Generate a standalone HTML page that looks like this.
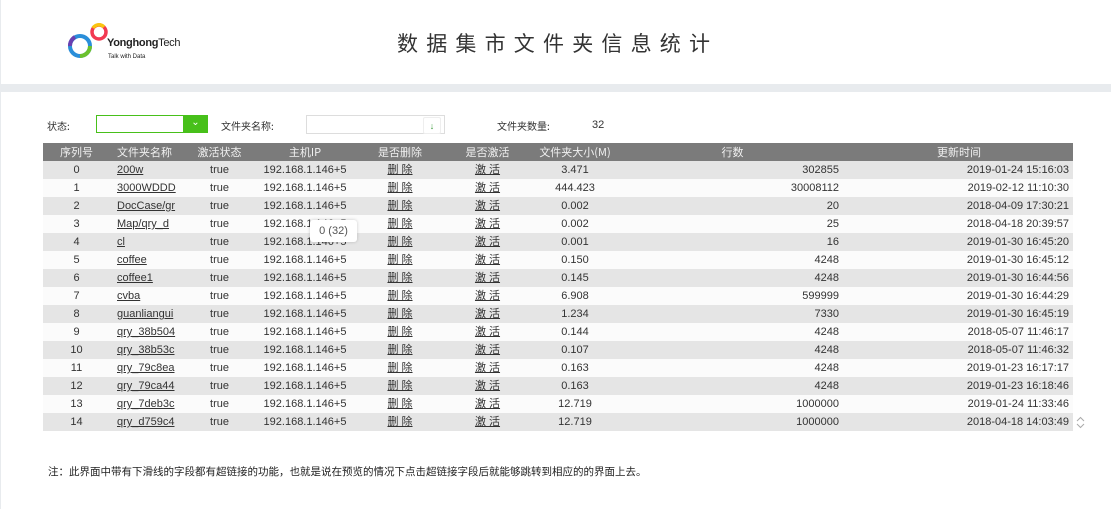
<!DOCTYPE html>
<html><head><meta charset="utf-8"><style>
*{margin:0;padding:0;box-sizing:border-box}
body{width:1111px;height:509px;background:#fff;position:relative;overflow:hidden;font-family:"Liberation Sans","Noto Sans CJK SC",sans-serif;color:#333;font-size:11px}
.a{position:absolute;white-space:nowrap}
.band{left:0;top:84px;width:1111px;height:8px;background:#e8ebee}
.lb{left:0;top:0;width:1px;height:509px;background:#e8ebee}
.title{left:397px;top:28px;font-size:21px;letter-spacing:8.2px;color:#333;font-family:"Noto Sans CJK SC",sans-serif}
table{position:absolute;left:43px;top:143px;width:1030px;border-collapse:collapse;font-size:11px;table-layout:fixed}
td,th{height:18px;padding:0;line-height:18px;white-space:nowrap;overflow:hidden}
th{background:#7b7b7b;color:#f0f0f0;font-weight:normal;font-family:"Noto Sans CJK SC",sans-serif}
tr:nth-child(even) td{background:#e5e5e5}
tr:nth-child(odd) td{background:#fbfbfb}
u{text-decoration:underline}
.c{text-align:center}.r{text-align:right;padding-right:6px}.t{text-align:right;padding-right:4px}
</style></head><body>
<div class="a lb"></div>
<svg class="a" style="left:66px;top:18px" width="44" height="44" viewBox="0 0 44 44">
<circle cx="33" cy="14" r="7" fill="none" stroke="#f23a52" stroke-width="3.5"/>
<path d="M27 10 A7 7 0 0 1 38 9" fill="none" stroke="#f9c510" stroke-width="3.5"/>
<circle cx="14" cy="28" r="10" fill="none" stroke="#2a8ed9" stroke-width="4"/>
<path d="M14 38 A10 10 0 0 0 24 28" fill="none" stroke="#6bc12d" stroke-width="4"/>
<path d="M4 28 A10 10 0 0 1 9 19" fill="none" stroke="#6a3fb0" stroke-width="4"/>
</svg>
<div class="a" style="left:107px;top:37px;font-size:11px;font-weight:bold;color:#222;letter-spacing:-0.3px">Yonghong<span style="font-weight:normal">Tech</span></div>
<div class="a" style="left:108px;top:54px;font-size:6px;color:#222">Talk with Data</div>
<div class="a title">数据集市文件夹信息统计</div>
<div class="a band"></div>
<div class="a" style="left:47px;top:118px;font-family:'Noto Sans CJK SC';font-size:10px">状态:</div>
<div class="a" style="left:96px;top:115px;width:112px;height:18px;border:1px solid #47c01a;background:#fff"></div>
<div class="a" style="left:183px;top:115px;width:25px;height:18px;background:#47c01a;color:#fff;text-align:center;line-height:16px;font-size:10px">&#8964;</div>
<div class="a" style="left:221px;top:118px;font-family:'Noto Sans CJK SC';font-size:10px">文件夹名称:</div>
<div class="a" style="left:306px;top:115px;width:139px;height:19px;border:1px solid #ddd;background:#fff"></div>
<div class="a" style="left:423px;top:117px;width:18px;height:17px;border:1px solid #eee;border-radius:2px;color:#3a9a3a;text-align:center;font-size:9px;line-height:16px">&#8595;</div>
<div class="a" style="left:497px;top:118px;font-family:'Noto Sans CJK SC';font-size:10px">文件夹数量:</div>
<div class="a" style="left:592px;top:119px;font-size:11px">32</div>
<table>
<colgroup><col style="width:67px"><col style="width:74px"><col style="width:71px"><col style="width:100px"><col style="width:90px"><col style="width:85px"><col style="width:90px"><col style="width:225px"><col style="width:228px"></colgroup>
<tr><th>序列号</th><th style="text-align:left;padding-left:7px">文件夹名称</th><th>激活状态</th><th>主机IP</th><th>是否删除</th><th>是否激活</th><th>文件夹大小(M)</th><th>行数</th><th>更新时间</th></tr>
<tr><td class="c">0</td><td style="padding-left:7px"><u>200w</u></td><td class="c">true</td><td class="c">192.168.1.146+5</td><td class="c"><u>删 除</u></td><td class="c"><u>激 活</u></td><td class="c">3.471</td><td class="r">302855</td><td class="t">2019-01-24 15:16:03</td></tr>
<tr><td class="c">1</td><td style="padding-left:7px"><u>3000WDDD</u></td><td class="c">true</td><td class="c">192.168.1.146+5</td><td class="c"><u>删 除</u></td><td class="c"><u>激 活</u></td><td class="c">444.423</td><td class="r">30008112</td><td class="t">2019-02-12 11:10:30</td></tr>
<tr><td class="c">2</td><td style="padding-left:7px"><u>DocCase/gr</u></td><td class="c">true</td><td class="c">192.168.1.146+5</td><td class="c"><u>删 除</u></td><td class="c"><u>激 活</u></td><td class="c">0.002</td><td class="r">20</td><td class="t">2018-04-09 17:30:21</td></tr>
<tr><td class="c">3</td><td style="padding-left:7px"><u>Map/qry_d</u></td><td class="c">true</td><td class="c">192.168.1.146+5</td><td class="c"><u>删 除</u></td><td class="c"><u>激 活</u></td><td class="c">0.002</td><td class="r">25</td><td class="t">2018-04-18 20:39:57</td></tr>
<tr><td class="c">4</td><td style="padding-left:7px"><u>cl</u></td><td class="c">true</td><td class="c">192.168.1.146+5</td><td class="c"><u>删 除</u></td><td class="c"><u>激 活</u></td><td class="c">0.001</td><td class="r">16</td><td class="t">2019-01-30 16:45:20</td></tr>
<tr><td class="c">5</td><td style="padding-left:7px"><u>coffee</u></td><td class="c">true</td><td class="c">192.168.1.146+5</td><td class="c"><u>删 除</u></td><td class="c"><u>激 活</u></td><td class="c">0.150</td><td class="r">4248</td><td class="t">2019-01-30 16:45:12</td></tr>
<tr><td class="c">6</td><td style="padding-left:7px"><u>coffee1</u></td><td class="c">true</td><td class="c">192.168.1.146+5</td><td class="c"><u>删 除</u></td><td class="c"><u>激 活</u></td><td class="c">0.145</td><td class="r">4248</td><td class="t">2019-01-30 16:44:56</td></tr>
<tr><td class="c">7</td><td style="padding-left:7px"><u>cvba</u></td><td class="c">true</td><td class="c">192.168.1.146+5</td><td class="c"><u>删 除</u></td><td class="c"><u>激 活</u></td><td class="c">6.908</td><td class="r">599999</td><td class="t">2019-01-30 16:44:29</td></tr>
<tr><td class="c">8</td><td style="padding-left:7px"><u>guanliangui</u></td><td class="c">true</td><td class="c">192.168.1.146+5</td><td class="c"><u>删 除</u></td><td class="c"><u>激 活</u></td><td class="c">1.234</td><td class="r">7330</td><td class="t">2019-01-30 16:45:19</td></tr>
<tr><td class="c">9</td><td style="padding-left:7px"><u>qry_38b504</u></td><td class="c">true</td><td class="c">192.168.1.146+5</td><td class="c"><u>删 除</u></td><td class="c"><u>激 活</u></td><td class="c">0.144</td><td class="r">4248</td><td class="t">2018-05-07 11:46:17</td></tr>
<tr><td class="c">10</td><td style="padding-left:7px"><u>qry_38b53c</u></td><td class="c">true</td><td class="c">192.168.1.146+5</td><td class="c"><u>删 除</u></td><td class="c"><u>激 活</u></td><td class="c">0.107</td><td class="r">4248</td><td class="t">2018-05-07 11:46:32</td></tr>
<tr><td class="c">11</td><td style="padding-left:7px"><u>qry_79c8ea</u></td><td class="c">true</td><td class="c">192.168.1.146+5</td><td class="c"><u>删 除</u></td><td class="c"><u>激 活</u></td><td class="c">0.163</td><td class="r">4248</td><td class="t">2019-01-23 16:17:17</td></tr>
<tr><td class="c">12</td><td style="padding-left:7px"><u>qry_79ca44</u></td><td class="c">true</td><td class="c">192.168.1.146+5</td><td class="c"><u>删 除</u></td><td class="c"><u>激 活</u></td><td class="c">0.163</td><td class="r">4248</td><td class="t">2019-01-23 16:18:46</td></tr>
<tr><td class="c">13</td><td style="padding-left:7px"><u>qry_7deb3c</u></td><td class="c">true</td><td class="c">192.168.1.146+5</td><td class="c"><u>删 除</u></td><td class="c"><u>激 活</u></td><td class="c">12.719</td><td class="r">1000000</td><td class="t">2019-01-24 11:33:46</td></tr>
<tr><td class="c">14</td><td style="padding-left:7px"><u>qry_d759c4</u></td><td class="c">true</td><td class="c">192.168.1.146+5</td><td class="c"><u>删 除</u></td><td class="c"><u>激 活</u></td><td class="c">12.719</td><td class="r">1000000</td><td class="t">2018-04-18 14:03:49</td></tr>
</table>
<div class="a" style="left:310px;top:220px;width:47px;height:22px;background:#fff;border-radius:3px;box-shadow:0 0 3px rgba(0,0,0,.2);font-size:11px;line-height:22px;text-align:center;color:#555">0 (32)</div>
<svg class="a" style="left:1076px;top:416px" width="9" height="13" viewBox="0 0 9 13"><path d="M1 5 L4.5 1.5 L8 5 M1 8 L4.5 11.5 L8 8" fill="none" stroke="#aaa" stroke-width="1"/></svg>
<div class="a" style="left:48px;top:464px;font-size:10.5px;font-family:'Noto Sans CJK SC',sans-serif;color:#222">注：此界面中带有下滑线的字段都有超链接的功能，也就是说在预览的情况下点击超链接字段后就能够跳转到相应的的界面上去。</div>
</body></html>
